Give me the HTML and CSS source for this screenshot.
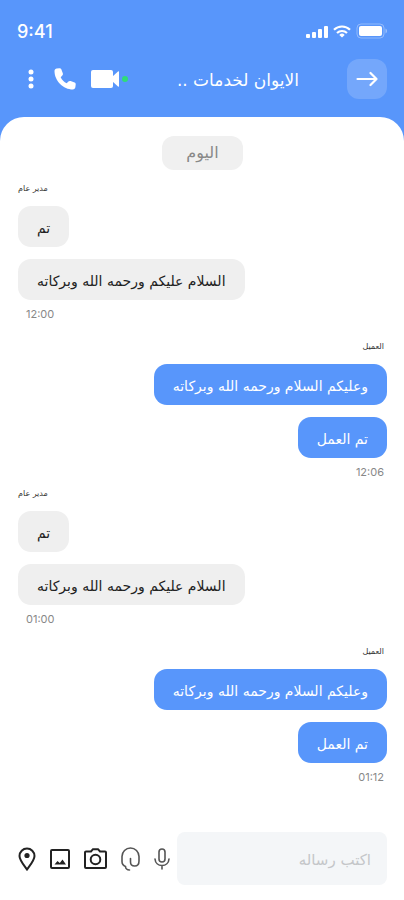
FILE: index.html
```html
<!DOCTYPE html>
<html lang="ar">
<head>
    <meta charset="UTF-8">
    <meta name="viewport" content="width=device-width, initial-scale=1.0">
    <title>المحادثة</title>
    <link rel="stylesheet" href="styles.css">
</head>
<body>
    <div class="header">
        <div class="status-bar">
            <span class="clock">9:41</span>
            <div class="status-icons">
                <svg width="22" height="13" viewBox="0 0 22 13" fill="currentColor">
                    <rect x="0" y="9" width="4" height="4" rx="1"/>
                    <rect x="6" y="7" width="4" height="6" rx="1"/>
                    <rect x="12" y="4" width="4" height="9" rx="1"/>
                    <rect x="18" y="1" width="4" height="12" rx="1"/>
                </svg>
                <svg width="18" height="13" viewBox="0 0 18 13" fill="none" stroke="currentColor" stroke-width="2.2">
                    <path d="M1 4.8a11.3 11.3 0 0 1 16 0"/>
                    <path d="M4 8a7.2 7.2 0 0 1 10 0"/>
                    <path d="M9 12.6L6.3 9.900a3.8 3.8 0 0 1 5.400 0z" fill="currentColor" stroke="none"/>
                </svg>
                <svg width="31" height="16" viewBox="0 0 31 16">
                    <rect x="1" y="1" width="27" height="14" rx="4" fill="none" stroke="#fff" stroke-opacity=".35"/>
                    <rect x="3" y="3" width="23" height="10" rx="2" fill="#fff"/>
                    <path d="M29.500 5.500v5c2-1 2-4 0-5z" fill="#fff" fill-opacity=".4"/>
                </svg>
            </div>
        </div>
        <div class="chat-bar">
            <button class="icon-btn" aria-label="المزيد">
                <svg width="6" height="20" viewBox="0 0 6 20" fill="currentColor">
                    <circle cx="3" cy="3" r="2.500"/><circle cx="3" cy="10" r="2.500"/><circle cx="3" cy="17" r="2.500"/>
                </svg>
            </button>
            <button class="icon-btn call" aria-label="مكالمة">
                <svg width="22" height="22" viewBox="0 0 22 22" fill="currentColor">
                    <path d="M.5 3C.5 1.400 1.600.7 2.700.5L5.300.2c1-.1 1.700.3 2 1.100l1.500 4c.3.9.1 1.600-.5 2.200L6.700 9.200c1.300 2.700 3.300 4.700 6 6l1.700-1.600c.6-.6 1.300-.8 2.200-.5l4 1.500c.8.300 1.200 1 1.100 2l-.3 2.400c-.2 1.600-1.200 2.500-2.600 2.500C9.500 21.500.5 13 .5 3z"/>
                </svg>
            </button>
            <button class="icon-btn video" aria-label="مكالمة فيديو">
                <svg width="28" height="18" viewBox="0 0 28 18" fill="currentColor">
                    <rect x="0" y="0" width="22" height="18" rx="2"/>
                    <path d="M21 7l6-5.500c.5-.4 1-.2 1 .5v14c0 .7-.5.9-1 .5L21 11z"/>
                </svg>
            </button>
            <span class="online"></span>
            <h1 class="chat-title" dir="rtl">الايوان لخدمات ..</h1>
            <button class="back" aria-label="رجوع">
                <svg width="22" height="16" viewBox="0 0 22 16" fill="none" stroke="currentColor" stroke-width="2.200" stroke-linecap="round" stroke-linejoin="round">
                    <path d="M1.500 8h19M14.500 2l6 6-6 6"/>
                </svg>
            </button>
        </div>
    </div>

    <div class="chat">
        <span class="day" dir="rtl">اليوم</span>

        <div class="group">
            <span class="sender" dir="rtl">مدير عام</span>
            <p class="bubble" dir="rtl">تم</p>
            <p class="bubble" dir="rtl">السلام عليكم ورحمه الله وبركاته</p>
            <span class="time">12:00</span>
        </div>

        <div class="group mine">
            <span class="sender" dir="rtl">العميل</span>
            <p class="bubble" dir="rtl">وعليكم السلام ورحمه الله وبركاته</p>
            <p class="bubble" dir="rtl">تم العمل</p>
            <span class="time">12:06</span>
        </div>

        <div class="group">
            <span class="sender" dir="rtl">مدير عام</span>
            <p class="bubble" dir="rtl">تم</p>
            <p class="bubble" dir="rtl">السلام عليكم ورحمه الله وبركاته</p>
            <span class="time">01:00</span>
        </div>

        <div class="group mine">
            <span class="sender" dir="rtl">العميل</span>
            <p class="bubble" dir="rtl">وعليكم السلام ورحمه الله وبركاته</p>
            <p class="bubble" dir="rtl">تم العمل</p>
            <span class="time">01:12</span>
        </div>

        <form class="composer">
            <div class="tools">
                <button type="button" class="icon-btn" aria-label="الموقع">
                    <svg width="18" height="24" viewBox="0 0 18 24" fill="none" stroke="currentColor" stroke-width="2">
                        <path d="M9 22.500C7 19.500 1.500 13.500 1.500 9a7.500 7.500 0 0 1 15 0c0 4.500-5.500 10.500-7.500 13.500z"/>
                        <circle cx="9" cy="8.500" r="2.600" fill="currentColor" stroke="none"/>
                    </svg>
                </button>
                <button type="button" class="icon-btn" aria-label="صورة">
                    <svg width="20" height="20" viewBox="0 0 20 20" fill="none" stroke="currentColor" stroke-width="2">
                        <rect x="1" y="1" width="18" height="18" rx="1"/>
                        <path d="M4.500 15.500l3-3.500 2.300 2 2.700-3.500 3.500 5z" fill="currentColor" stroke="none"/>
                    </svg>
                </button>
                <button type="button" class="icon-btn" aria-label="الكاميرا">
                    <svg width="23" height="21" viewBox="0 0 23 21" fill="none" stroke="currentColor" stroke-width="2">
                        <path d="M2 3.500h5L9 1.200h5l2 2.300h5a1 1 0 0 1 1 1V19a1 1 0 0 1-1 1H2a1 1 0 0 1-1-1V4.500a1 1 0 0 1 1-1z"/>
                        <circle cx="11.500" cy="11.500" r="4.800"/>
                    </svg>
                </button>
                <button type="button" class="icon-btn thin" aria-label="إرفاق ملف">
                    <svg width="19" height="24" viewBox="0 0 19 24" fill="none" stroke="currentColor" stroke-width="1.600" stroke-linecap="round">
                        <path d="M8.500 23C6 23 4.500 21.500 4.500 19.500 2 18.500 1 17 1 14.500V9.500a8.500 8.500 0 0 1 17 0V14c0 3-1.700 5-4.300 5S9.500 17.300 9.500 15v-3.500"/>
                    </svg>
                </button>
                <button type="button" class="icon-btn thin" aria-label="تسجيل صوتي">
                    <svg width="16" height="22" viewBox="0 0 16 22" fill="none" stroke="currentColor" stroke-width="1.600" stroke-linecap="round">
                        <rect x="5" y="1" width="6" height="13" rx="3"/>
                        <path d="M1 11c.3 4 3.200 6.500 7 6.500s6.700-2.500 7-6.500M8 17.500V21"/>
                    </svg>
                </button>
            </div>
            <input type="text" class="message-input" dir="rtl" placeholder="اكتب رساله" aria-label="اكتب رساله">
        </form>
    </div>
</body>
</html>
```
FILE: styles.css
```css
* {
    margin: 0;
    padding: 0;
    box-sizing: border-box;
    font-family: 'DejaVu Sans', sans-serif;
}

body {
    background-color: #5896fb;
    min-height: 100vh;
    display: flex;
    flex-direction: column;
}

button {
    border: none;
    background: none;
    cursor: pointer;
    color: inherit;
}

svg {
    display: block;
}

.header {
    color: white;
    padding: 20px 17px 18px;
}

.status-bar {
    display: flex;
    justify-content: space-between;
    align-items: center;
    height: 22px;
}

.clock {
    font-family: 'Inter', sans-serif;
    font-size: 18px;
    font-weight: 500;
}

.status-icons {
    display: flex;
    align-items: center;
    gap: 5px;
}

.chat-bar {
    display: flex;
    align-items: center;
    margin-top: 17px;
    padding-left: 11px;
}

.call {
    margin-left: 20px;
}

.video {
    margin-left: 15px;
}

.online {
    width: 6px;
    height: 6px;
    border-radius: 50%;
    background-color: #2fdc78;
    margin-left: 3px;
}

.chat-title {
    flex: 1;
    font-size: 17px;
    font-weight: 400;
    line-height: 24px;
    padding: 2px 48px 0 0;
}

.back {
    width: 40px;
    height: 40px;
    border-radius: 12px;
    background-color: rgba(255, 255, 255, 0.17);
    display: flex;
    align-items: center;
    justify-content: center;
}

.chat {
    flex: 1;
    background-color: white;
    border-radius: 24px 24px 0 0;
    padding: 19px 17px 15px 18px;
    display: flex;
    flex-direction: column;
}

.day {
    align-self: center;
    background-color: #f0f0f0;
    color: #888;
    border-radius: 12px;
    padding: 0 24px;
    font-size: 16px;
    line-height: 34px;
    margin-bottom: 13px;
}

.group {
    display: flex;
    flex-direction: column;
    align-items: flex-start;
    margin-bottom: 19px;
}

.mine {
    align-items: flex-end;
    margin-bottom: 8px;
}

.sender {
    font-size: 8px;
    line-height: 12px;
    color: #333;
    margin-bottom: 11px;
}

.bubble {
    background-color: #efefef;
    color: #222;
    border-radius: 13px;
    padding: 3px 19px 0;
    font-size: 14px;
    line-height: 38px;
    margin-bottom: 12px;
}

.mine .bubble {
    background-color: #5896fb;
    color: white;
}

.mine .sender {
    margin-right: 3px;
}

.time {
    font-family: 'Inter', sans-serif;
    font-size: 11px;
    line-height: 16px;
    color: #888;
    margin: -6px 3px 0 8px;
}

.composer {
    display: flex;
    align-items: center;
    gap: 7px;
    margin-top: auto;
}

.tools {
    display: flex;
    align-items: center;
    gap: 14px;
    color: #222;
}

.thin {
    color: #555;
}

.message-input {
    flex: 1;
    min-width: 0;
    height: 53px;
    border: none;
    border-radius: 8px;
    background-color: #f4f6f8;
    padding: 2px 16px 0;
    font-size: 15px;
    color: #333;
}

.message-input::placeholder {
    color: #c4c6c9;
    opacity: 1;
}
```
